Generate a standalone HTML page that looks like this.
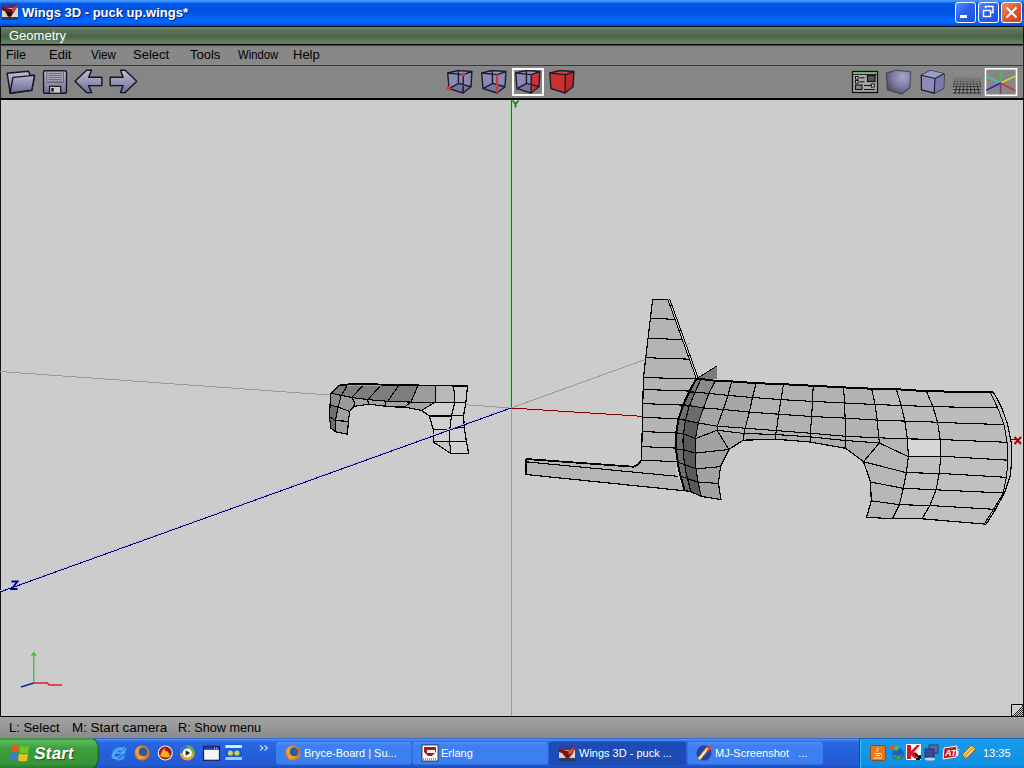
<!DOCTYPE html>
<html><head><meta charset="utf-8">
<style>
*{margin:0;padding:0;box-sizing:border-box}
html,body{width:1024px;height:768px;overflow:hidden;background:#cccccc;font-family:"Liberation Sans",sans-serif;position:relative}
.abs{position:absolute}
#title{left:0;top:0;width:1024px;height:26px;background:linear-gradient(#4096ff 0,#3a8ffc 1.5px,#1a6ef0 2.5px,#0058e4 4px,#0052de 10px,#0058e8 14px,#0064fa 18px,#0066ff 22px,#005ceb 24px,#0044c0 26px)}
#tline{left:0;top:26px;width:1024px;height:1px;background:#050a20}
#geo{left:0;top:27px;width:1024px;height:17px;background:linear-gradient(#6e886c 0,#627d5f 1.5px,#5a7457 4px,#4e684b 8px,#4a6348 9px,#536d50 11.5px,#5d795a 13.5px,#668364 17px);border-left:1px solid #111;border-right:1px solid #111}
#gline{left:0;top:44px;width:1024px;height:1px;background:#000}
#menu{left:0;top:45px;width:1024px;height:20px;background:linear-gradient(#333 0,#6a6a6a 1px,#888 2px,#888);border-left:1px solid #222;border-right:1px solid #222}
#mline{left:0;top:65px;width:1024px;height:1px;background:#3a3a3a}
#tool{left:0;top:66px;width:1024px;height:32px;background:#868686;border-left:1px solid #222;border-right:1px solid #222}
#vline{left:0;top:98px;width:1024px;height:2px;background:#000}
#view{left:0;top:100px;width:1024px;height:617px;background:#cccccc;border-left:1px solid #111;border-right:1px solid #111;border-bottom:1px solid #000}
#status{left:0;top:717px;width:1024px;height:21px;background:linear-gradient(#a2a2a2,#9a9a9a 40%,#8a8a8a)}
.txt{position:absolute;white-space:nowrap;line-height:1}
#t_title{left:22px;top:6px;color:#fff;font-weight:bold;font-size:13px;text-shadow:1px 1px 0 #0a1a66}
#t_geo{left:9px;top:29px;color:#fff;font-size:13px}
.menu{top:48px;font-size:13px;color:#000}
.stat{top:721px;font-size:13px;color:#000}
#t_start{left:33px;top:744.5px;color:#fff;font-size:17px;font-weight:bold;transform:skewX(-9deg);transform-origin:0 100%;letter-spacing:0.2px;text-shadow:1px 1px 1px #1a4a1a}
.task{top:748px;font-size:11px;color:#fff}
#t_clock{left:983px;top:748px;font-size:11px;color:#fff}

</style></head><body>
<div id="title" class="abs"></div>
<div id="tline" class="abs"></div>
<div id="geo" class="abs"></div>
<div id="gline" class="abs"></div>
<div id="menu" class="abs"></div>
<div id="mline" class="abs"></div>
<div id="tool" class="abs"></div>
<div id="vline" class="abs"></div>
<div id="view" class="abs"></div>
<div id="status" class="abs"></div>
<svg class="abs" style="left:0;top:0" width="1024" height="768" viewBox="0 0 1024 768">
<defs>
<linearGradient id="btnb" x1="0" y1="0" x2="1" y2="1"><stop offset="0" stop-color="#5a8cff"/><stop offset="0.45" stop-color="#2a62f0"/><stop offset="1" stop-color="#1c4ee0"/></linearGradient>
<linearGradient id="btnr" x1="0" y1="0" x2="1" y2="1"><stop offset="0" stop-color="#f09070"/><stop offset="0.5" stop-color="#e2562c"/><stop offset="1" stop-color="#c8401a"/></linearGradient>
</defs>
<!-- title icon -->
<rect x="2" y="4" width="16" height="16" fill="#dcd6cc"/>
<rect x="2" y="4" width="16" height="4" fill="#3a3a88"/>
<polygon points="2,8 2,6.5 6,8 12,9 17,5 17.5,6.5 14,12 11,16.5 8,16.5 5,11.5 2,10" fill="#7a0c0c"/>
<polygon points="12,9 17,5 17.5,6.5 14,12 12,11" fill="#d83c3c"/>
<polygon points="6,11.5 8,16.5 11,16.5 12,13 9,12" fill="#1a0404"/>
<rect x="2" y="17" width="16" height="3" fill="#2a3a58"/>
<!-- window buttons -->
<rect x="955.5" y="2.5" width="20" height="20" rx="2.5" fill="url(#btnb)" stroke="#fff" stroke-width="1"/>
<rect x="960" y="15" width="7" height="3" fill="#fff"/>
<rect x="978.5" y="2.5" width="20" height="20" rx="2.5" fill="url(#btnb)" stroke="#fff" stroke-width="1"/>
<rect x="983.5" y="10.5" width="7" height="6" fill="none" stroke="#fff" stroke-width="1.4"/>
<path d="M985.5,8.2V6.5H993V12.5H991" fill="none" stroke="#fff" stroke-width="1.4"/>
<rect x="1001.5" y="2.5" width="20" height="20" rx="2.5" fill="url(#btnr)" stroke="#fff" stroke-width="1"/>
<path d="M1006.5,7.5L1016.5,17.5M1016.5,7.5L1006.5,17.5" stroke="#fff" stroke-width="2"/>

<defs>
<linearGradient id="lav" x1="0" y1="0" x2="0" y2="1"><stop offset="0" stop-color="#c0c0d2"/><stop offset="1" stop-color="#6c6c9a"/></linearGradient>
<linearGradient id="lav2" x1="0" y1="0" x2="0" y2="1"><stop offset="0" stop-color="#b4b4ca"/><stop offset="1" stop-color="#6a6a9a"/></linearGradient>
<radialGradient id="sm" cx="0.68" cy="0.28" r="0.85"><stop offset="0" stop-color="#a8a8cc"/><stop offset="0.5" stop-color="#7c7ca0"/><stop offset="1" stop-color="#40405a"/></radialGradient>
</defs>
<!-- folder -->
<polygon points="7.2,73.2 28.5,71.2 30,75 34.6,75.4 31.7,90.3 10.1,93.2" fill="url(#lav)" stroke="#151520" stroke-width="1.4" stroke-linejoin="round"/>
<polygon points="13,77.4 34.6,75.4 31.7,90.3 10.1,93.2" fill="url(#lav2)" stroke="#151520" stroke-width="1.4" stroke-linejoin="round"/>
<!-- floppy -->
<rect x="43.5" y="70.8" width="23" height="22.4" rx="1.5" fill="url(#lav)" stroke="#151520" stroke-width="1.4"/>
<rect x="46.8" y="71.3" width="16.8" height="11" fill="#a8a8b4" stroke="#55556a" stroke-width="0.8"/>
<path d="M48.5,73.5H62M48.5,75.5H62M48.5,77.5H62M48.5,79.5H62M48.5,81.3H62" stroke="#6a6a78" stroke-width="0.9"/>
<rect x="49.5" y="86.3" width="11.2" height="7" fill="#c8c8c8" stroke="#151520" stroke-width="1.2"/>
<rect x="51.2" y="88" width="2.6" height="3.6" fill="#222"/>
<!-- arrows -->
<polygon points="75,81.3 86.6,70.3 91.6,70.3 88.6,77.3 101.9,77.3 101.9,85.6 88.6,85.6 91.6,92.6 86.6,92.6" fill="url(#lav)" stroke="#151520" stroke-width="1.4" stroke-linejoin="round"/>
<polygon points="136.7,81.3 125.1,70.3 120.5,70.3 123.1,77.3 110.2,77.3 110.2,85.6 123.1,85.6 120.5,92.6 125.1,92.6" fill="url(#lav)" stroke="#151520" stroke-width="1.4" stroke-linejoin="round"/>
<!-- selection box -->
<rect x="513" y="69" width="30" height="26" fill="none" stroke="#fff" stroke-width="2"/>
<polygon points="447.7,73.0 458.3,70.5 471.9,71.5 471.0,86.7 463.1,93.0 449.0,88.7" fill="#8a8ab2"/>
<polygon points="447.7,73.0 458.3,70.5 471.9,71.5 463.3,74.6" fill="#9494bc"/>
<polygon points="449.0,88.7 458.5,83.4 471.0,86.7 463.1,93.0" fill="#76769e"/>
<path d="M447.7,73.0L458.3,70.5 M458.3,70.5L471.9,71.5 M471.9,71.5L463.3,74.6 M463.3,74.6L447.7,73.0 M449.0,88.7L458.5,83.4 M458.5,83.4L471.0,86.7 M471.0,86.7L463.1,93.0 M463.1,93.0L449.0,88.7 M447.7,73.0L449.0,88.7 M458.3,70.5L458.5,83.4 M471.9,71.5L471.0,86.7 M463.3,74.6L463.1,93.0" stroke="#1c1c2c" stroke-width="1.4" fill="none" stroke-linecap="round" stroke-linejoin="round"/>
<circle cx="463.3" cy="74.6" r="2" fill="#e03a3a"/>
<circle cx="448.5" cy="88.2" r="2.2" fill="#e03a3a"/>
<polygon points="481.7,73.0 492.3,70.5 505.9,71.5 505.0,86.7 497.1,93.0 483.0,88.7" fill="#8a8ab2"/>
<polygon points="481.7,73.0 492.3,70.5 505.9,71.5 497.3,74.6" fill="#9494bc"/>
<polygon points="483.0,88.7 492.5,83.4 505.0,86.7 497.1,93.0" fill="#76769e"/>
<path d="M481.7,73.0L492.3,70.5 M492.3,70.5L505.9,71.5 M505.9,71.5L497.3,74.6 M497.3,74.6L481.7,73.0 M483.0,88.7L492.5,83.4 M492.5,83.4L505.0,86.7 M505.0,86.7L497.1,93.0 M497.1,93.0L483.0,88.7 M481.7,73.0L483.0,88.7 M492.3,70.5L492.5,83.4 M505.9,71.5L505.0,86.7 M497.3,74.6L497.1,93.0" stroke="#1c1c2c" stroke-width="1.4" fill="none" stroke-linecap="round" stroke-linejoin="round"/>
<path d="M497.3,74.6L497.1,93.0" stroke="#e03a3a" stroke-width="2"/>
<polygon points="515.7,73.0 526.3,70.5 539.9,71.5 539.0,86.7 531.1,93.0 517.0,88.7" fill="#8a8ab2"/>
<polygon points="515.7,73.0 526.3,70.5 539.9,71.5 531.3,74.6" fill="#9494bc"/>
<polygon points="517.0,88.7 526.5,83.4 539.0,86.7 531.1,93.0" fill="#76769e"/>
<polygon points="531.3,74.6 539.9,71.5 539.0,86.7 531.1,93.0" fill="#cc3434"/>
<path d="M515.7,73.0L526.3,70.5 M526.3,70.5L539.9,71.5 M539.9,71.5L531.3,74.6 M531.3,74.6L515.7,73.0 M517.0,88.7L526.5,83.4 M526.5,83.4L539.0,86.7 M539.0,86.7L531.1,93.0 M531.1,93.0L517.0,88.7 M515.7,73.0L517.0,88.7 M526.3,70.5L526.5,83.4 M539.9,71.5L539.0,86.7 M531.3,74.6L531.1,93.0" stroke="#1c1c2c" stroke-width="1.4" fill="none" stroke-linecap="round" stroke-linejoin="round"/>
<polygon points="549.7,73.0 560.3,70.5 573.9,71.5 565.3,74.6" fill="#d84444"/>
<polygon points="549.7,73.0 565.3,74.6 565.1,93.0 551.0,88.7" fill="#cc3232"/>
<polygon points="565.3,74.6 573.9,71.5 573.0,86.7 565.1,93.0" fill="#bc2a2a"/>
<path d="M549.7,73.0L560.3,70.5 M560.3,70.5L573.9,71.5 M573.9,71.5L565.3,74.6 M565.3,74.6L549.7,73.0 M551.0,88.7L565.1,93.0 M565.1,93.0L573.0,86.7 M549.7,73.0L551.0,88.7 M573.9,71.5L573.0,86.7 M565.3,74.6L565.1,93.0" stroke="#1c1c2c" stroke-width="1.4" fill="none" stroke-linecap="round" stroke-linejoin="round"/>
<!-- dialog icon -->
<rect x="852.5" y="71.5" width="25" height="21" fill="#a6a6a6" stroke="#111" stroke-width="1.3"/>
<rect x="853" y="72" width="24" height="2" fill="#6cb46c"/>
<path d="M852.5,74.5H877.5" stroke="#111" stroke-width="0.8"/>
<rect x="855.5" y="76.5" width="2.6" height="2.6" fill="#ddd" stroke="#111" stroke-width="1"/>
<rect x="855.5" y="80.5" width="2.6" height="2.6" fill="#ddd" stroke="#111" stroke-width="1"/>
<path d="M859.5,77.8H864.5M859.5,81.8H864.5M864,85.5H871M864,89.5H875" stroke="#111" stroke-width="1"/>
<rect x="867.5" y="75.5" width="7.5" height="6" fill="#555" stroke="#111" stroke-width="1.2"/>
<rect x="855.5" y="85" width="6.5" height="4.5" fill="#888" stroke="#111" stroke-width="1.1"/>
<rect x="871.3" y="84" width="3" height="3" fill="#ddd" stroke="#111" stroke-width="1"/>
<!-- smooth cube -->
<path d="M886.2,73.1 L895.75,70.2 L910.75,71.8 L909.9,87.7 L901.6,94.3 L887.4,89.75 Z" fill="url(#sm)" stroke="#3a3a4e" stroke-width="1.2" stroke-linejoin="round" stroke-opacity="0.7"/>
<!-- flat cube -->
<polygon points="921.3,75.3 930.5,70.5 944,73.8 943.7,88.2 934.2,93.2 921.5,89.8" fill="#8c8cba" stroke="#1a1a2a" stroke-width="1.2" stroke-linejoin="round"/>
<polygon points="921.3,75.3 930.5,70.5 944,73.8 935,78.5" fill="#9c9cca"/>
<polygon points="935,78.5 944,73.8 943.7,88.2 934.2,93.2" fill="#7a7aaa"/>
<path d="M921.3,75.3L935,78.5L944,73.8M935,78.5L934.2,93.2" stroke="#1a1a2a" stroke-width="1.1" fill="none"/>
<!-- grid icon -->
<defs><clipPath id="gclip"><rect x="953" y="70" width="28" height="23.7"/></clipPath>
<linearGradient id="gfade" x1="0" y1="0" x2="0" y2="1"><stop offset="0" stop-color="#8a8a8a" stop-opacity="1"/><stop offset="0.3" stop-color="#8a8a8a" stop-opacity="0.9"/><stop offset="0.75" stop-color="#8a8a8a" stop-opacity="0.1"/><stop offset="1" stop-color="#8a8a8a" stop-opacity="0"/></linearGradient></defs>
<g clip-path="url(#gclip)">
<rect x="953" y="70" width="28" height="23.7" fill="#8e8e8e"/>
<path d="M908.2,96L967,40M912.4,96L967,40M916.6,96L967,40M920.8,96L967,40M925.0,96L967,40M929.2,96L967,40M933.4,96L967,40M937.6,96L967,40M941.8,96L967,40M946.0,96L967,40M950.2,96L967,40M954.4,96L967,40M958.6,96L967,40M962.8,96L967,40M967.0,96L967,40M971.2,96L967,40M975.4,96L967,40M979.6,96L967,40M983.8,96L967,40M988.0,96L967,40M992.2,96L967,40M996.4,96L967,40M1000.6,96L967,40M1004.8,96L967,40M1009.0,96L967,40M1013.2,96L967,40M1017.4,96L967,40M1021.6,96L967,40M1025.8,96L967,40M953,93H981M953,89.6H981M953,86.6H981M953,84H981M953,81.8H981M953,79.8H981M953,78H981M953,76.4H981" stroke="#1e1e1e" stroke-width="0.9" fill="none"/>
<rect x="953" y="70" width="28" height="23.7" fill="url(#gfade)"/>
</g>
<!-- axes icon -->
<rect x="985.5" y="68.8" width="31" height="26.5" fill="none" stroke="#fff" stroke-width="1.6"/>
<g stroke-width="1.5" stroke-linecap="round">
<path d="M1000.5,83V70.8" stroke="#4cc04c"/>
<path d="M1000.5,83V93.5" stroke="#7a3a8a"/>
<path d="M1000.5,83L1015,76.3" stroke="#d8d040"/>
<path d="M1000.5,83L986.5,76.3" stroke="#40c0c0"/>
<path d="M1000.5,83L986.7,90.2" stroke="#2020c8"/>
<path d="M1000.5,83L1015,90.6" stroke="#d83030"/>
</g>

<g shape-rendering="crispEdges">
<g shape-rendering="crispEdges">
<line x1="510.5" y1="100" x2="510.5" y2="408" stroke="#98e098" stroke-width="1"/>
<line x1="511.5" y1="100" x2="511.5" y2="408" stroke="#1a7a1a" stroke-width="1"/>
<line x1="511.5" y1="408" x2="511.5" y2="716" stroke="#9a9a9a" stroke-width="1"/>
</g>
<polyline points="511.0,408.0 0.0,371.5" fill="none" stroke="#9a9a9a" stroke-width="1" stroke-linejoin="round"/>
<polyline points="511.0,408.0 690.0,343.3" fill="none" stroke="#9a9a9a" stroke-width="1" stroke-linejoin="round"/>
<polyline points="511.0,409.0 1016.0,441.0" fill="none" stroke="#f0b4b4" stroke-width="1.0" stroke-linejoin="round"/>
<polyline points="511.0,408.0 1016.0,440.0" fill="none" stroke="#7a0808" stroke-width="1.0" stroke-linejoin="round"/>
<polyline points="511.0,407.0 0.0,591.0" fill="none" stroke="#b8b8f0" stroke-width="1.0" stroke-linejoin="round"/>
<polyline points="511.0,408.0 0.0,592.0" fill="none" stroke="#000070" stroke-width="1.0" stroke-linejoin="round"/>
<polygon points="338.2,386.0 351.4,384.3 375.0,384.7 400.0,385.6 467.5,386.0 465.9,402.1 463.6,415.4 464.2,427.0 466.4,441.4 468.6,453.1 450.4,453.1 433.2,442.0 433.2,429.3 429.3,416.0 421.6,410.4 404.4,407.1 390.3,406.8 368.7,404.2 353.9,406.4 349.7,411.4 348.4,421.2 347.5,434.3 335.7,431.8 331.0,428.4 329.3,416.5 330.2,403.8 331.0,393.2" fill="#a6a6a6" />
<polygon points="338.2,386.0 417.7,386.0 411.0,402.1 387.8,401.3 367.9,399.6 351.8,397.5 341.2,395.3 331.0,393.2" fill="#7e7e7e" />
<polygon points="417.7,386.0 435.4,386.0 435.4,402.1 411.0,402.1" fill="#9c9c9c" />
<polygon points="435.4,386.0 453.7,386.0 454.8,402.1 435.4,402.1" fill="#b8b8b8" />
<polygon points="453.7,386.0 467.5,386.0 465.9,402.1 454.8,402.1" fill="#cacaca" />
<polygon points="331.0,393.2 341.2,395.3 338.2,407.2 329.3,404.7" fill="#8a8a8a" />
<polygon points="341.2,395.3 351.8,397.5 354.3,402.1 353.9,406.4 349.7,411.4 338.2,407.2" fill="#9a9a9a" />
<polygon points="329.3,404.7 338.2,407.2 335.3,420.8 329.3,416.5" fill="#6e6e6e" />
<polygon points="338.2,407.2 349.7,411.4 348.4,421.2 335.3,420.8" fill="#a2a2a2" />
<polygon points="329.3,416.5 335.3,420.8 335.7,431.8 331.0,428.4" fill="#707070" />
<polygon points="335.3,420.8 348.4,421.2 347.5,434.3 335.7,431.8" fill="#a0a0a0" />
<polygon points="354.3,402.1 387.8,401.3 411.0,402.1 435.4,402.1 421.6,410.4 404.4,407.1 390.3,406.8 368.7,404.2 353.9,406.4" fill="#a4a4a4" />
<polygon points="435.4,402.1 465.9,402.1 463.6,415.4 464.2,427.0 466.4,441.4 468.6,453.1 450.4,453.1 433.2,442.0 433.2,429.3 429.3,416.0 421.6,410.4" fill="#d0d0d0" />
<polygon points="433.2,442.0 449.8,441.4 450.4,453.1" fill="#c6c6c6" />
<polyline points="338.2,386.0 351.4,384.3 375.0,384.7 400.0,385.6 467.5,386.0 465.9,402.1 463.6,415.4 464.2,427.0 466.4,441.4 468.6,453.1 450.4,453.1 433.2,442.0 433.2,429.3 429.3,416.0 421.6,410.4 404.4,407.1 390.3,406.8 368.7,404.2 353.9,406.4 349.7,411.4 348.4,421.2 347.5,434.3 335.7,431.8 331.0,428.4 329.3,416.5 330.2,403.8 331.0,393.2 338.2,386.0" fill="none" stroke="#000" stroke-width="1.2" stroke-linejoin="round"/>
<polyline points="338.2,385.6 351.4,384.0 375.0,384.3 400.0,385.1 430.0,385.6" fill="none" stroke="#000" stroke-width="1.8" stroke-linejoin="round"/>
<polyline points="331.0,393.2 341.2,395.3 351.8,397.5 367.9,399.6 387.8,401.3 411.0,402.1 435.4,402.1 454.8,402.1 465.9,402.1" fill="none" stroke="#000" stroke-width="1.1" stroke-linejoin="round"/>
<polyline points="347.1,386.0 341.2,395.3 338.2,407.2 335.3,420.8 335.7,431.8" fill="none" stroke="#000" stroke-width="1.1" stroke-linejoin="round"/>
<polyline points="362.4,386.0 351.8,397.5 354.3,402.1 353.9,406.4" fill="none" stroke="#000" stroke-width="1.1" stroke-linejoin="round"/>
<polyline points="380.2,386.0 367.9,399.6" fill="none" stroke="#000" stroke-width="1.1" stroke-linejoin="round"/>
<polyline points="398.3,386.0 387.8,401.3" fill="none" stroke="#000" stroke-width="1.1" stroke-linejoin="round"/>
<polyline points="417.7,386.0 411.0,402.1 404.4,407.1" fill="none" stroke="#000" stroke-width="1.1" stroke-linejoin="round"/>
<polyline points="435.4,386.0 435.4,402.1 421.6,410.4" fill="none" stroke="#000" stroke-width="1.1" stroke-linejoin="round"/>
<polyline points="453.7,386.0 454.8,402.1 451.5,416.0 449.8,429.3 449.8,441.4 450.4,453.1" fill="none" stroke="#000" stroke-width="1.1" stroke-linejoin="round"/>
<polyline points="329.3,404.7 338.2,407.2 349.7,411.4" fill="none" stroke="#000" stroke-width="1.1" stroke-linejoin="round"/>
<polyline points="329.3,416.5 335.3,420.8 348.4,421.2" fill="none" stroke="#000" stroke-width="1.1" stroke-linejoin="round"/>
<polyline points="429.3,416.0 451.5,416.0 463.6,415.4" fill="none" stroke="#000" stroke-width="1.1" stroke-linejoin="round"/>
<polyline points="433.2,429.3 449.8,429.3 464.2,427.0" fill="none" stroke="#000" stroke-width="1.1" stroke-linejoin="round"/>
<polyline points="433.2,442.0 449.8,441.4 466.4,441.4" fill="none" stroke="#000" stroke-width="1.1" stroke-linejoin="round"/>
<polyline points="367.5,399.8 369.0,404.2" fill="none" stroke="#000" stroke-width="1.1" stroke-linejoin="round"/>
<polyline points="385.8,401.5 385.8,406.0" fill="none" stroke="#000" stroke-width="1.1" stroke-linejoin="round"/>
<polyline points="511.0,407.0 0.0,591.0" fill="none" stroke="#b8b8f0" stroke-width="1.0" stroke-linejoin="round"/>
<polyline points="511.0,408.0 0.0,592.0" fill="none" stroke="#000070" stroke-width="1.0" stroke-linejoin="round"/>
<polygon points="652.6,299.4 668.2,299.4 696.8,378.5 689.6,391.0 683.2,404.6 678.7,418.3 676.4,432.0 675.7,440.0 676.2,451.0 676.0,461.8 641.5,459.8 643.4,378.0" fill="#b4b4b4" />
<polygon points="696.8,378.5 717.0,366.0 717.0,379.5" fill="#7c7c7c" />
<polyline points="696.8,378.5 717.0,366.0" fill="none" stroke="#000" stroke-width="1" stroke-linejoin="round"/>
<polygon points="525.9,459.0 633.3,466.7 641.5,459.8 676.0,461.8 676.8,476.0 684.6,490.6 525.9,474.5" fill="#b6b6b6" />
<polygon points="696.4,378.5 715.5,380.8 731.7,381.4 756.1,383.2 783.5,384.2 813.3,385.8 843.5,387.4 871.6,388.7 896.3,389.2 926.4,391.2 960.0,391.8 993.5,392.3 1001.9,407.9 1007.6,424.6 1011.2,442.3 1011.9,457.8 1010.3,475.8 1004.9,492.2 995.5,509.4 986.1,524.2 922.0,518.8 892.4,518.8 866.6,517.2 871.3,500.8 870.5,482.0 863.5,461.7 845.6,448.3 810.2,442.0 775.4,439.2 743.1,440.2 728.9,449.5 720.5,466.7 718.4,483.3 721.0,499.5 701.2,496.4 690.8,491.7 684.6,490.6 678.9,469.8 676.2,451.0 675.7,440.0 676.4,432.0 678.7,418.3 683.2,404.6 689.6,391.0 696.4,378.7" fill="#b2b2b2" />
<polygon points="871.6,388.7 896.3,389.2 926.4,391.2 960.0,391.8 990.4,392.8 997.7,407.9 1004.0,424.6 1007.1,442.3 940.2,439.4 907.4,438.9 878.8,437.8" fill="#bcbcbc" />
<polygon points="845.6,436.3 878.8,437.8 879.3,443.0 845.6,440.5" fill="#b8b8b8" />
<polygon points="715.5,380.8 756.1,383.2 745.2,428.2 717.1,426.2 698.3,423.0 703.5,407.9 708.8,393.4" fill="#a6a6a6" />
<polygon points="717.1,430.3 744.2,433.5 775.4,434.5 810.2,436.9 845.6,440.5 879.3,443.0 863.5,461.7 845.6,448.3 810.2,442.0 775.4,439.2 743.1,440.2 728.9,449.5" fill="#aeaeae" />
<polygon points="698.3,423.0 717.1,426.2 717.1,430.3 717.4,429.7 728.9,449.5 720.5,466.7 718.4,483.3 721.0,499.5 701.2,496.4 698.1,482.3 696.0,468.8 695.5,453.1 695.5,438.5" fill="#a2a2a2" />
<polygon points="717.4,429.7 743.1,440.2 728.9,449.5" fill="#a8a8a8" />
<polygon points="696.4,378.7 689.6,391.0 683.2,404.6 678.7,418.3 676.4,432.0 675.7,440.0 676.2,451.0 678.9,469.8 684.6,490.6 690.8,491.7 686.1,472.9 683.5,456.2 683.0,440.0 683.5,433.8 685.5,419.7 689.2,406.5 694.6,392.8 701.0,379.1" fill="#6e6e6e" />
<polygon points="696.4,378.7 701.0,379.1 694.6,392.8 689.6,391.0" fill="#7a7a7a" />
<polygon points="701.0,379.1 694.6,392.8 689.2,406.5 685.5,419.7 683.5,433.8 683.0,440.0 683.5,456.2 686.1,472.9 690.8,491.7 701.2,496.4 698.1,482.3 696.0,468.8 695.5,453.1 695.5,438.5 698.3,423.0 703.5,407.9 708.8,393.4 715.5,380.8" fill="#5a5a5a" />
<polygon points="701.0,379.1 715.5,380.8 708.8,393.4 703.5,407.9 689.2,406.5 694.6,392.8" fill="#8a8a8a" />
<polygon points="689.2,406.5 703.5,407.9 698.3,423.0 685.5,419.7" fill="#6c6c6c" />
<polygon points="879.3,443.0 907.4,438.9 940.2,439.4 1007.1,442.3 1008.0,460.2 1006.4,477.3 1003.3,493.0 993.5,509.4 984.5,523.5 922.0,518.8 892.4,518.8 866.6,517.2 871.3,500.8 870.5,482.0 863.5,461.7" fill="#c0c0c0" />
<polygon points="879.3,443.0 907.4,438.9 908.4,456.6 906.4,472.7 903.3,488.3 899.4,504.7 892.4,518.8 866.6,517.2 871.3,500.8 870.5,482.0 863.5,461.7" fill="#b6b6b6" />
<polygon points="907.4,438.9 940.2,439.4 940.8,456.2 908.4,456.6" fill="#d6d6d6" />
<polygon points="993.5,392.3 1001.9,407.9 1007.6,424.6 1011.2,442.3 1011.9,457.8 1010.3,475.8 1004.9,492.2 995.5,509.4 986.1,524.2 984.5,523.5 993.5,509.4 1003.3,493.0 1006.4,477.3 1008.0,460.2 1007.1,442.3 1004.0,424.6 997.7,407.9 990.4,392.8" fill="#c2c2c2" />
<polyline points="652.6,299.4 668.2,299.4" fill="none" stroke="#000" stroke-width="1.2" stroke-linejoin="round"/>
<polyline points="652.6,299.4 643.4,378.0 641.5,459.8" fill="none" stroke="#000" stroke-width="1.2" stroke-linejoin="round"/>
<polyline points="667.8,299.4 696.3,378.5" fill="none" stroke="#000" stroke-width="1.0" stroke-linejoin="round"/>
<polyline points="669.8,299.4 698.3,378.5" fill="none" stroke="#000" stroke-width="1.0" stroke-linejoin="round"/>
<polyline points="650.4,318.0 675.5,319.5" fill="none" stroke="#000" stroke-width="1.1" stroke-linejoin="round"/>
<polyline points="648.1,338.2 682.8,339.7" fill="none" stroke="#000" stroke-width="1.1" stroke-linejoin="round"/>
<polyline points="645.8,357.7 689.8,359.2" fill="none" stroke="#000" stroke-width="1.1" stroke-linejoin="round"/>
<polyline points="643.5,377.5 696.2,379.0" fill="none" stroke="#000" stroke-width="1.1" stroke-linejoin="round"/>
<polyline points="643.1,389.5 689.6,391.0" fill="none" stroke="#000" stroke-width="1.1" stroke-linejoin="round"/>
<polyline points="642.8,403.6 683.0,405.1" fill="none" stroke="#000" stroke-width="1.1" stroke-linejoin="round"/>
<polyline points="642.5,417.3 678.6,418.8" fill="none" stroke="#000" stroke-width="1.1" stroke-linejoin="round"/>
<polyline points="642.2,431.5 676.3,433.0" fill="none" stroke="#000" stroke-width="1.1" stroke-linejoin="round"/>
<polyline points="641.8,446.6 676.1,448.1" fill="none" stroke="#000" stroke-width="1.1" stroke-linejoin="round"/>
<polyline points="641.5,460.2 677.8,461.7" fill="none" stroke="#000" stroke-width="1.1" stroke-linejoin="round"/>
<polyline points="525.9,459.0 633.3,466.7 638.0,464.5 641.5,459.8" fill="none" stroke="#000" stroke-width="1.8" stroke-linejoin="round"/>
<polyline points="525.9,461.8 678.2,476.4" fill="none" stroke="#000" stroke-width="1.1" stroke-linejoin="round"/>
<polyline points="525.9,474.5 684.0,490.7" fill="none" stroke="#000" stroke-width="1.2" stroke-linejoin="round"/>
<polyline points="525.9,459.0 525.9,474.5" fill="none" stroke="#000" stroke-width="1.2" stroke-linejoin="round"/>
<polyline points="696.4,378.5 715.5,380.8 731.7,381.4 756.1,383.2 783.5,384.2 813.3,385.8 843.5,387.4 871.6,388.7 896.3,389.2 926.4,391.2 960.0,391.8 993.5,392.3" fill="none" stroke="#000" stroke-width="2.0" stroke-linejoin="round"/>
<polyline points="993.5,392.3 1001.9,407.9 1007.6,424.6 1011.2,442.3 1011.9,457.8 1010.3,475.8 1004.9,492.2 995.5,509.4 986.1,524.2" fill="none" stroke="#000" stroke-width="1.2" stroke-linejoin="round"/>
<polyline points="990.4,392.8 997.7,407.9 1004.0,424.6 1007.1,442.3 1008.0,460.2 1006.4,477.3 1003.3,493.0 993.5,509.4 984.5,523.5" fill="none" stroke="#000" stroke-width="1.0" stroke-linejoin="round"/>
<polyline points="986.1,524.2 922.0,518.8 892.4,518.8 866.6,517.2 866.6,517.2 871.3,500.8 870.5,482.0 863.5,461.7 863.5,461.7 845.6,448.3 810.2,442.0 775.4,439.2 743.1,440.2 728.9,449.5 720.5,466.7 718.4,483.3 721.0,499.5 721.0,499.5 701.2,496.4 690.8,491.7 684.6,490.6" fill="none" stroke="#000" stroke-width="1.2" stroke-linejoin="round"/>
<polyline points="696.4,378.7 689.6,391.0 683.2,404.6 678.7,418.3 676.4,432.0 675.7,440.0 676.2,451.0 678.9,469.8 684.6,490.6" fill="none" stroke="#000" stroke-width="2.0" stroke-linejoin="round"/>
<polyline points="701.0,379.1 694.6,392.8 689.2,406.5 685.5,419.7 683.5,433.8 683.0,440.0 683.5,456.2 686.1,472.9 690.8,491.7" fill="none" stroke="#000" stroke-width="1.1" stroke-linejoin="round"/>
<polyline points="715.5,380.8 708.8,393.4 703.5,407.9 698.3,423.0 695.5,438.5 695.5,453.1 696.0,468.8 698.1,482.3 701.2,496.4" fill="none" stroke="#000" stroke-width="1.1" stroke-linejoin="round"/>
<polyline points="686.0,391.4 708.8,393.4 728.0,395.4 752.5,397.5 781.0,399.6 812.3,401.4 844.6,403.0 875.1,404.5 901.1,405.5 932.9,406.6 960.0,407.2 997.7,407.9" fill="none" stroke="#000" stroke-width="1.1" stroke-linejoin="round"/>
<polyline points="682.8,404.6 703.5,407.9 723.3,409.5 749.4,412.1 778.5,414.2 811.8,416.5 845.1,418.1 877.2,420.1 904.8,421.1 937.6,422.2 960.0,423.2 1004.0,424.6" fill="none" stroke="#000" stroke-width="1.1" stroke-linejoin="round"/>
<polyline points="677.8,418.8 698.3,423.0 717.1,426.2 745.2,428.2 776.5,430.6 810.2,433.2 845.6,436.3 878.8,437.8 907.4,438.9 940.2,439.4 960.0,440.4 1007.1,442.3" fill="none" stroke="#000" stroke-width="1.1" stroke-linejoin="round"/>
<polyline points="717.1,430.3 744.2,433.5 775.4,434.5 810.2,436.9 845.6,440.5 879.3,443.0" fill="none" stroke="#000" stroke-width="1.1" stroke-linejoin="round"/>
<polyline points="731.7,381.4 728.0,395.4 723.3,409.5 717.1,426.2 717.1,430.3" fill="none" stroke="#000" stroke-width="1.1" stroke-linejoin="round"/>
<polyline points="756.1,383.2 752.5,397.5 749.4,412.1 745.2,428.2 744.2,433.5 743.1,440.2" fill="none" stroke="#000" stroke-width="1.1" stroke-linejoin="round"/>
<polyline points="783.5,384.2 781.0,399.6 778.5,414.2 776.5,430.6 775.4,434.5 775.4,439.2" fill="none" stroke="#000" stroke-width="1.1" stroke-linejoin="round"/>
<polyline points="813.3,385.8 812.3,401.4 811.8,416.5 810.2,433.2 810.2,442.0" fill="none" stroke="#000" stroke-width="1.1" stroke-linejoin="round"/>
<polyline points="843.5,387.4 844.6,403.0 845.1,418.1 845.6,436.3 845.6,448.3" fill="none" stroke="#000" stroke-width="1.1" stroke-linejoin="round"/>
<polyline points="871.6,388.7 875.1,404.5 877.2,420.1 878.8,437.8 879.3,443.0" fill="none" stroke="#000" stroke-width="1.1" stroke-linejoin="round"/>
<polyline points="896.3,389.2 901.1,405.0 904.8,421.1 907.4,438.9 908.4,456.6 906.4,472.7 903.3,488.3 899.4,504.7 892.4,518.8" fill="none" stroke="#000" stroke-width="1.1" stroke-linejoin="round"/>
<polyline points="926.4,391.2 932.9,406.6 937.6,422.2 940.2,439.4 940.8,456.2 939.2,473.4 936.1,489.8 929.9,505.5 922.0,518.8" fill="none" stroke="#000" stroke-width="1.1" stroke-linejoin="round"/>
<polyline points="717.1,430.3 728.9,449.5" fill="none" stroke="#000" stroke-width="1.1" stroke-linejoin="round"/>
<polyline points="717.1,430.3 695.5,438.5 683.5,433.8 676.4,432.9" fill="none" stroke="#000" stroke-width="1.1" stroke-linejoin="round"/>
<polyline points="728.9,449.5 695.5,453.1 684.6,450.0 676.0,449.5" fill="none" stroke="#000" stroke-width="1.1" stroke-linejoin="round"/>
<polyline points="720.5,466.7 696.0,468.8 684.6,464.6 677.5,462.0" fill="none" stroke="#000" stroke-width="1.1" stroke-linejoin="round"/>
<polyline points="718.4,483.3 698.1,482.3 686.1,478.1 680.0,476.0" fill="none" stroke="#000" stroke-width="1.1" stroke-linejoin="round"/>
<polyline points="682.8,404.6 689.2,406.5" fill="none" stroke="#000" stroke-width="1.1" stroke-linejoin="round"/>
<polyline points="686.0,391.4 694.6,392.8" fill="none" stroke="#000" stroke-width="1.1" stroke-linejoin="round"/>
<polyline points="677.8,418.8 685.5,419.7" fill="none" stroke="#000" stroke-width="1.1" stroke-linejoin="round"/>
<polyline points="879.3,443.0 863.5,461.7" fill="none" stroke="#000" stroke-width="1.1" stroke-linejoin="round"/>
<polyline points="879.3,443.0 908.4,456.6 940.8,456.2 1008.0,460.2" fill="none" stroke="#000" stroke-width="1.1" stroke-linejoin="round"/>
<polyline points="863.5,461.7 906.4,472.7 939.2,473.4 1006.4,477.3" fill="none" stroke="#000" stroke-width="1.1" stroke-linejoin="round"/>
<polyline points="870.5,482.0 903.3,488.3 936.1,489.8 1003.3,493.0" fill="none" stroke="#000" stroke-width="1.1" stroke-linejoin="round"/>
<polyline points="871.3,500.8 899.4,504.7 929.9,505.5 995.5,509.4" fill="none" stroke="#000" stroke-width="1.1" stroke-linejoin="round"/>
<polyline points="684.5,345.3 690.0,343.3" fill="none" stroke="#9a9a9a" stroke-width="1" stroke-linejoin="round"/>
</g>
<!-- labels & gizmo -->
<path d="M512.5,100.5L515.5,104L518.5,100.5M515.5,104V107.5" stroke="#0f8a0f" stroke-width="1.8" fill="none"/>
<path d="M1014.5,437L1021,444M1021,437L1014.5,444" stroke="#a00000" stroke-width="2" fill="none"/>
<path d="M11.5,581.5H17.5L11.5,589H17.5" stroke="#000090" stroke-width="1.8" fill="none"/>
<path d="M33.8,683V653M31.5,656L33.8,652.5L36,656" stroke="#30c030" stroke-width="1.2" fill="none"/>
<path d="M33.8,683H47.5L49,685H62" stroke="#d82020" stroke-width="1.4" fill="none"/>
<path d="M33.8,683L21,687" stroke="#1020b0" stroke-width="1.4" fill="none"/>
<!-- resize grip -->
<rect x="1011.5" y="704.5" width="11" height="11.5" fill="#cfcfcf" stroke="#000" stroke-width="1"/>
<defs><pattern id="chk" x="0" y="0" width="2" height="2" patternUnits="userSpaceOnUse"><rect width="2" height="2" fill="#cfcfcf"/><rect width="1" height="1" fill="#222"/><rect x="1" y="1" width="1" height="1" fill="#222"/></pattern></defs><path d="M1012,716L1023,705V716Z" fill="url(#chk)"/>
<defs>
<linearGradient id="tb" x1="0" y1="0" x2="0" y2="1"><stop offset="0" stop-color="#2a58b8"/><stop offset="0.05" stop-color="#4a8ef8"/><stop offset="0.14" stop-color="#2a66e0"/><stop offset="0.5" stop-color="#2460dc"/><stop offset="0.9" stop-color="#225ad4"/><stop offset="1" stop-color="#1c4cb8"/></linearGradient>
<linearGradient id="st" x1="0" y1="0" x2="0" y2="1"><stop offset="0" stop-color="#3a8a3a"/><stop offset="0.1" stop-color="#5cba5c"/><stop offset="0.35" stop-color="#3c9e3c"/><stop offset="0.85" stop-color="#35963a"/><stop offset="1" stop-color="#2a7a2a"/></linearGradient>
<linearGradient id="tbtn" x1="0" y1="0" x2="0" y2="1"><stop offset="0" stop-color="#5290f8"/><stop offset="0.15" stop-color="#3c80f2"/><stop offset="1" stop-color="#3a7ef0"/></linearGradient>
<linearGradient id="tray" x1="0" y1="0" x2="0" y2="1"><stop offset="0" stop-color="#18a4ee"/><stop offset="0.1" stop-color="#1a9aea"/><stop offset="0.9" stop-color="#1090e4"/><stop offset="1" stop-color="#0c80d8"/></linearGradient>
</defs>
<rect x="0" y="738" width="1024" height="30" fill="url(#tb)"/>
<!-- start button -->
<path d="M0,738H93Q99,740 99,753Q99,766 94,768H0Z" fill="url(#st)"/>
<path d="M93.5,738.5Q98.5,741 98.5,753Q98.5,765 94,768" stroke="#1e5a3a" stroke-width="1.2" fill="none"/>
<!-- windows logo -->
<g transform="translate(10,744)">
<path d="M2,1Q5,0 9,1.5L8,8Q4,7 1,8Z" fill="#e85a1c"/>
<path d="M10,2Q14,3 19,2L18,9Q14,10 9,8.5Z" fill="#6cc828"/>
<path d="M1,9Q4,8 8,9L7,16Q3,15 0,16Z" fill="#3a7ae8"/>
<path d="M9,9.5Q13,11 18,10L17,17Q13,18 8,16.5Z" fill="#f0c020"/>
</g>
<!-- quick launch -->
<g transform="translate(110.8,745)">
<path d="M13.2,10.5A5.3,5.3 0 1,1 13.3,7.8H3.2" fill="none" stroke="#3aa0f0" stroke-width="2.6"/>
<ellipse cx="8" cy="8" rx="8" ry="3" transform="rotate(-35 8 8)" fill="none" stroke="#7cc4ff" stroke-width="0.9"/>
</g>
<g transform="translate(134,745)">
<circle cx="8" cy="8" r="7.5" fill="#e07a18"/>
<circle cx="8.8" cy="7" r="4.6" fill="#2a5ea0"/>
<path d="M1,6Q3,1 8,1Q4,4 5,9Q7,12 12,11Q9,15 4,14Z" fill="#f0a030"/>
</g>
<g transform="translate(157.3,745)">
<circle cx="8" cy="8" r="7.6" fill="#f4e4e0"/>
<circle cx="8" cy="8" r="6.4" fill="#a01818"/>
<path d="M3,11Q4,5 8,3Q7,7 10,6Q12,9 13,11Q10,14 3,11Z" fill="#f8b020"/>
</g>
<g transform="translate(179.8,745)">
<circle cx="7.5" cy="8" r="7.4" fill="#f0a020"/>
<path d="M7.5,0.6A7.4,7.4 0 0,1 14.9,8H7.5Z" fill="#60b830"/>
<path d="M0.1,8A7.4,7.4 0 0,1 7.5,0.6V8Z" fill="#3070d0"/>
<circle cx="7.5" cy="8" r="4.6" fill="#fff"/>
<path d="M5.8,5.3L10.4,8L5.8,10.7Z" fill="#222"/>
</g>
<g transform="translate(203,745.8)">
<rect x="0.5" y="0.5" width="16" height="14" fill="#f4f4f4" stroke="#182050" stroke-width="1.2"/>
<rect x="1" y="1" width="15" height="3" fill="#1a3ab0"/>
<rect x="11" y="2" width="1" height="1" fill="#fff"/><rect x="13" y="2" width="1" height="1" fill="#fff"/>
</g>
<g transform="translate(225.4,744)">
<rect x="0" y="0" width="16.6" height="17.5" fill="#1a5ad8"/>
<rect x="0" y="1" width="16.6" height="3" fill="#d8e8ff"/>
<rect x="0" y="13" width="16.6" height="3" fill="#a0c8f8"/>
<circle cx="5" cy="9" r="2.6" fill="#c8d060"/><circle cx="11.5" cy="9" r="2.6" fill="#c8d060"/>
</g>
<path d="M260,745.5L263,748L260,750.5M264.5,745.5L267.5,748L264.5,750.5" stroke="#c8dcff" stroke-width="1.2" fill="none"/>
<!-- task buttons -->
<rect x="276" y="742" width="135.5" height="22.5" rx="3" fill="url(#tbtn)"/>
<rect x="412.5" y="742" width="135.5" height="22.5" rx="3" fill="url(#tbtn)"/>
<rect x="549" y="741.5" width="137" height="24" rx="3" fill="#1e4fb8"/>
<rect x="550" y="743" width="135" height="22" rx="2" fill="#1c4cb4"/>
<rect x="687.5" y="742" width="135.5" height="22.5" rx="3" fill="url(#tbtn)"/>
<!-- task icons -->
<g transform="translate(285,745)">
<circle cx="8" cy="8" r="7.5" fill="#e07a18"/>
<circle cx="8.8" cy="7" r="4.6" fill="#2a5ea0"/>
<path d="M1,6Q3,1 8,1Q4,4 5,9Q7,12 12,11Q9,15 4,14Z" fill="#f0a030"/>
</g>
<g transform="translate(422,745)">
<rect x="0" y="0" width="16" height="16" fill="#fff"/>
<rect x="0" y="0" width="16" height="16" fill="none" stroke="#222" stroke-width="0.8"/>
<path d="M2,2H14V7L10,11H6L2,7Z" fill="#b01818"/>
<rect x="5" y="5" width="8" height="3" fill="#fff"/>
<path d="M1,14H15" stroke="#222" stroke-width="1.2" stroke-dasharray="1,1"/>
</g>
<g transform="translate(559,745)">
<rect x="0" y="0" width="16" height="16" fill="#d8d4cc"/>
<rect x="0" y="0" width="16" height="5" fill="#3a3c8c"/>
<polygon points="0,4 4,5 9,6 16,2 14,8 10,13 7,13 3,8 0,7" fill="#8a1010"/>
<polygon points="9,6 16,2 13,8 10,10" fill="#e04848"/>
<rect x="0" y="13" width="16" height="3" fill="#2a3c5a"/>
</g>
<g transform="translate(696,744)">
<circle cx="8" cy="9" r="7.5" fill="#2a3ea8"/>
<path d="M3,15L12,4" stroke="#f8d040" stroke-width="3"/>
<path d="M10,6L14,1L16,3L12,8Z" fill="#e84020"/>
<path d="M3,15L12,4" stroke="#fff" stroke-width="0.8"/>
</g>
<!-- tray -->
<rect x="859" y="738" width="165" height="30" fill="url(#tray)"/>
<rect x="860" y="739" width="1" height="29" fill="#30c4fc"/>
<rect x="859" y="738" width="1" height="30" fill="#0a3c96"/>
<rect x="859" y="738" width="165" height="1" fill="#1468c0"/>
<!-- tray icons -->
<g transform="translate(870,745)">
<rect x="0.5" y="0.5" width="15" height="15" rx="1.5" fill="#e8781a" stroke="#8a4008" stroke-width="0.8"/>
<path d="M4.5,8.5H11M5.5,10.5H10M3.5,13H12M7,7Q6,5 8.5,3M11,9.5Q13,10 11.5,11.5" stroke="#fff4d8" stroke-width="1" fill="none"/>
</g>
<g transform="translate(889,744)">
<circle cx="9" cy="10" r="6" fill="#1a60c8"/>
<path d="M4,10Q9,14 14,10Q12,15 9,16Q5,15 4,10Z" fill="#40a040"/>
<path d="M1,3Q3,1 6,2L5,6Q3,5 1,6Z" fill="#e05a20"/><path d="M6,2Q8,3 10,2L9,6Q7,7 5,6Z" fill="#60c030"/>
</g>
<g transform="translate(906,744)">
<rect x="0" y="0" width="15" height="16" fill="#fff"/>
<path d="M1,1H5V7L11,1H14L8,8L12,12L9,15L5,11V15H1Z" fill="#e01020"/>
<path d="M9,9L14,15M14,15V11M14,15H10" stroke="#111" stroke-width="2"/>
</g>
<g transform="translate(924,744)">
<rect x="5" y="1" width="9" height="8" fill="#5a6aa8" stroke="#222a60" stroke-width="0.8"/>
<rect x="1" y="5" width="9" height="8" fill="#3a4a90" stroke="#222a60" stroke-width="0.8"/>
<ellipse cx="6" cy="15" rx="5" ry="1.5" fill="#c8d0f0"/>
</g>
<g transform="translate(942,745)">
<path d="M2,3L15,1L14,12L1,14Z" fill="#c81818" stroke="#fff" stroke-width="1"/>
<text x="3" y="11" font-family="Liberation Sans" font-weight="bold" font-style="italic" font-size="9" fill="#fff">ATi</text>
</g>
<g transform="translate(961,744)">
<path d="M1,11L11,1L15,5L5,15Z" fill="#e8b030" stroke="#8a6020" stroke-width="0.8"/>
<path d="M3,10L10,3M6,12L12,6" stroke="#fff8d0" stroke-width="1"/>
</g>

</svg>
<div class="txt" id="t_title">Wings 3D - puck up.wings*</div>
<div class="txt" id="t_geo">Geometry</div>
<div class="txt menu" style="left:6px;transform:scaleX(0.95);transform-origin:0 0">File</div>
<div class="txt menu" style="left:49px">Edit</div>
<div class="txt menu" style="left:91px;transform:scaleX(0.89);transform-origin:0 0">View</div>
<div class="txt menu" style="left:133px">Select</div>
<div class="txt menu" style="left:190px">Tools</div>
<div class="txt menu" style="left:238px;transform:scaleX(0.87);transform-origin:0 0">Window</div>
<div class="txt menu" style="left:293px">Help</div>
<div class="txt stat" style="left:9px">L: Select</div>
<div class="txt stat" style="left:72px;transform:scaleX(1.03);transform-origin:0 0">M: Start camera</div>
<div class="txt stat" style="left:178px;transform:scaleX(0.975);transform-origin:0 0">R: Show menu</div>
<div class="txt" id="t_start">Start</div>
<div class="txt task" style="left:304px">Bryce-Board | Su...</div>
<div class="txt task" style="left:441px">Erlang</div>
<div class="txt task" style="left:579px">Wings 3D - puck ...</div>
<div class="txt task" style="left:715px">MJ-Screenshot &nbsp;&nbsp;...</div>
<div class="txt" id="t_clock">13:35</div>
</body></html>
